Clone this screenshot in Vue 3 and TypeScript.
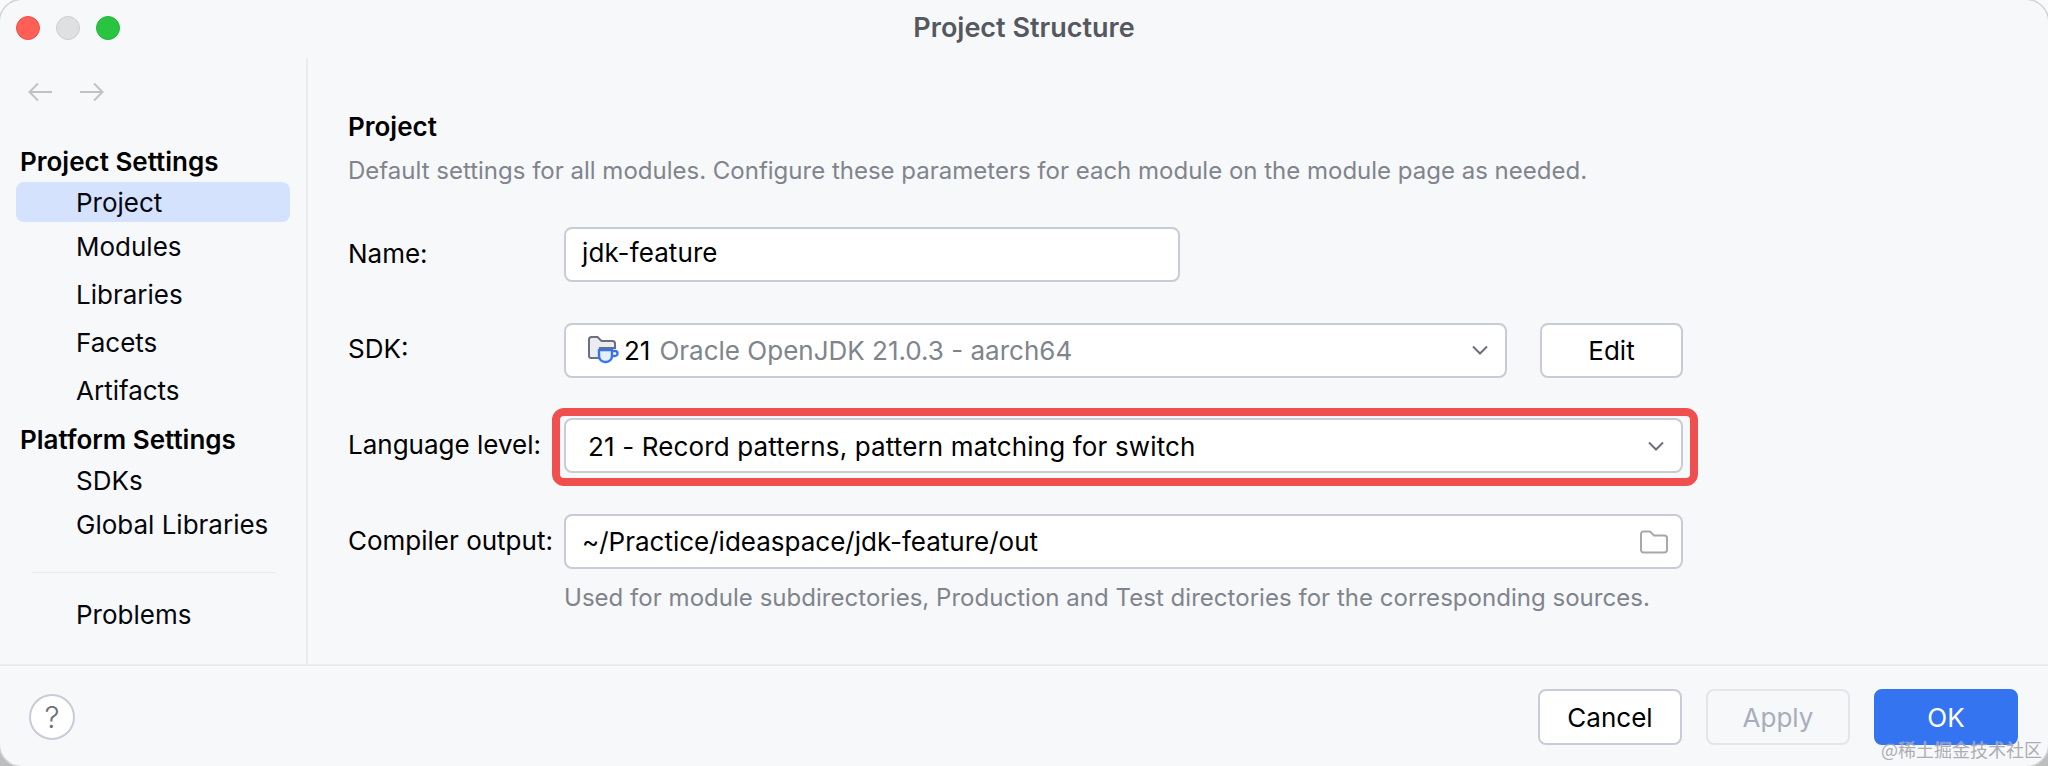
<script setup lang="ts">
interface NavItem {
  label: string
  active?: boolean
}

const projectItems: NavItem[] = [
  { label: 'Project', active: true },
  { label: 'Modules' },
  { label: 'Libraries' },
  { label: 'Facets' },
  { label: 'Artifacts' },
]
const platformItems: NavItem[] = [{ label: 'SDKs' }, { label: 'Global Libraries' }]
</script>

<template>
  <div class="window">
    <header class="titlebar">
      <div class="lights">
        <span class="light red" />
        <span class="light grey" />
        <span class="light green" />
      </div>
      <span class="title">Project Structure</span>
    </header>

    <div class="body">
      <aside class="sidebar">
        <div class="arrows">
          <svg width="24" height="20" viewBox="0 0 24 20" fill="none" stroke="#c0c2c6" stroke-width="2">
            <path d="M24 10H1.5M10 1.5 1.5 10l8.500 8.500" />
          </svg>
          <svg width="24" height="20" viewBox="0 0 24 20" fill="none" stroke="#c0c2c6" stroke-width="2">
            <path d="M0 10h22.500M14 1.500l8.500 8.500-8.500 8.500" />
          </svg>
        </div>
        <div class="group-title first">Project Settings</div>
        <div class="nav-item project-item" v-for="item in projectItems" :key="item.label" :class="{ active: item.active }">
          {{ item.label }}
        </div>
        <div class="group-title second">Platform Settings</div>
        <div class="nav-item platform-item" v-for="item in platformItems" :key="item.label">{{ item.label }}</div>
        <div class="nav-sep" />
        <div class="nav-item">Problems</div>
      </aside>

      <main class="content">
        <h1 class="heading">Project</h1>
        <p class="hint">Default settings for all modules. Configure these parameters for each module on the module page as needed.</p>

        <div class="form">
          <label class="label">Name:</label>
          <div class="field name-field">jdk-feature</div>

          <label class="label">SDK:</label>
          <div class="sdk-row">
            <div class="field sdk-field">
              <svg class="sdk-icon" width="32" height="30" viewBox="0 0 32 30" fill="none">
                <path d="M2 21V4.500A2.500 2.500 0 0 1 4.500 2h6l4 4h11A2.500 2.500 0 0 1 28 8.500V13H13v10H4a2 2 0 0 1-2-2Z" fill="#ebecf0" stroke="#6c707e" stroke-width="2" />
                <path d="M12 15h13v6a6 6 0 0 1-6 6h-1a6 6 0 0 1-6-6v-6Z" fill="#e7effd" stroke="#3574f0" stroke-width="2.400" />
                <path d="M25 16h3a2.500 2.500 0 0 1 0 5h-3" stroke="#3574f0" stroke-width="2.400" />
              </svg>
              <span class="sdk-num">21</span>
              <span class="sdk-name">Oracle OpenJDK 21.0.3 - aarch64</span>
              <svg class="chevron" width="16" height="10" viewBox="0 0 16 10" fill="none" stroke="#6c707e" stroke-width="2">
                <path d="m1 1.500 7 7 7-7" />
              </svg>
            </div>
            <button class="btn edit">Edit</button>
          </div>

          <label class="label">Language level:</label>
          <div class="field lang-field">
            <span class="lang-text">21 - Record patterns, pattern matching for switch</span>
            <svg class="chevron" width="16" height="10" viewBox="0 0 16 10" fill="none" stroke="#6c707e" stroke-width="2">
              <path d="m1 1.500 7 7 7-7" />
            </svg>
            <span class="highlight" />
          </div>

          <label class="label">Compiler output:</label>
          <div class="field output-field">
            <span>~/Practice/ideaspace/jdk-feature/out</span>
            <svg class="folder" width="30" height="26" viewBox="0 0 30 26" fill="none" stroke="#a6a8ae" stroke-width="2">
              <path d="M2 21V5a2.500 2.500 0 0 1 2.500-2.500h6.500l4 4h10.500A2.500 2.500 0 0 1 28 9v12a2.500 2.500 0 0 1-2.500 2.500h-21A2.500 2.500 0 0 1 2 21Z" />
            </svg>
          </div>

          <span />
          <p class="hint output-hint">Used for module subdirectories, Production and Test directories for the corresponding sources.</p>
        </div>
      </main>
    </div>

    <footer class="footer">
      <button class="help">?</button>
      <div class="actions">
        <button class="btn">Cancel</button>
        <button class="btn disabled">Apply</button>
        <button class="btn primary">OK</button>
      </div>
    </footer>

    <span class="watermark">@稀土掘金技术社区</span>
  </div>
</template>

<style>
html,
body {
  margin: 0;
  background: linear-gradient(#fafafa, #bdbdbd);
}
</style>

<style scoped>
.window {
  position: relative;
  width: 2048px;
  height: 766px;
  box-sizing: border-box;
  display: flex;
  flex-direction: column;
  background: #f7f8fa;
  border-radius: 22px;
  box-shadow: 0 0 0 1.500px #d2d3d6;
  overflow: hidden;
  color: #000;
  font-family: Inter, 'Noto Sans', sans-serif;
  font-size: 26px;
}

.titlebar {
  position: relative;
  height: 58px;
  flex: none;
  display: flex;
  align-items: center;
  justify-content: center;
}

.lights {
  position: absolute;
  left: 16px;
  top: 16px;
  display: flex;
  gap: 16px;
}

.light {
  width: 24px;
  height: 24px;
  box-sizing: border-box;
  border-radius: 50%;
}

.red {
  background: #ff5f57;
  border: 1px solid #e9524b;
}

.grey {
  background: #dfe0e2;
  border: 1px solid #cdced1;
}

.green {
  background: #29c440;
  border: 1px solid #22b538;
}

.title {
  font-size: 27px;
  font-weight: 600;
  color: #55585e;
  margin-top: -4px;
}

.body {
  flex: 1;
  display: flex;
  min-height: 0;
}

.sidebar {
  width: 308px;
  flex: none;
  box-sizing: border-box;
  padding: 24px 16px 0 16px;
  border-right: 2px solid #ebecf0;
  display: flex;
  flex-direction: column;
}

.arrows {
  display: flex;
  gap: 28px;
  padding-left: 12px;
  height: 20px;
}

.group-title {
  font-weight: 600;
  padding-left: 4px;
  height: 40px;
  line-height: 40px;
}

.first {
  margin-top: 40px;
  height: 40px;
  line-height: 40px;
}

.second {
  height: 43px;
  line-height: 44px;
}

.nav-item {
  height: 40px;
  line-height: 40px;
  padding-left: 60px;
  border-radius: 8px;
  color: #05070c;
  margin-bottom: 8px;
}

.nav-item.active {
  background: #d4e2fd;
  margin-bottom: 4px;
}

.project-item {
  line-height: 42px;
}

.platform-item {
  margin-bottom: 4px;
}

.nav-sep {
  height: 1px;
  background: #ebecf0;
  margin: 23px 14px 22px 16px;
}

.content {
  flex: 1;
  min-width: 0;
  padding: 53px 0 0 40px;
}

.heading {
  margin: 0;
  font-size: 26px;
  font-weight: 600;
  line-height: 32px;
}

.hint {
  margin: 0;
  font-size: 24px;
  color: #80848c;
  line-height: 30px;
  white-space: nowrap;
}

.content > .hint {
  margin-top: 13px;
}

.form {
  margin-top: 41px;
  display: grid;
  grid-template-columns: 216px 1119px;
  grid-auto-rows: 55px;
  row-gap: 40.7px;
  align-items: center;
}

.label {
  margin-top: -3px;
}

.field {
  position: relative;
  box-sizing: border-box;
  height: 55px;
  background: #fff;
  border: 2px solid #c9ccd6;
  border-radius: 8px;
  display: flex;
  align-items: center;
  padding: 0 17px 0 16px;
  white-space: nowrap;
}

.name-field {
  width: 616px;
  padding-bottom: 4px;
  letter-spacing: 0.1px;
}

.sdk-row {
  display: flex;
  justify-content: space-between;
}

.sdk-field {
  width: 943px;
  padding-left: 21px;
}

.sdk-icon {
  flex: none;
}

.sdk-num {
  margin-left: 5px;
}

.sdk-name {
  margin-left: 9px;
  color: #80848c;
}

.chevron {
  margin-left: auto;
}

.lang-text {
  padding: 2px 0 0 6px;
  letter-spacing: 0.14px;
}

.highlight {
  position: absolute;
  inset: -12px -17px -15px -14px;
  border: 8px solid #ef4f4f;
  border-radius: 12px;
  pointer-events: none;
}

.output-field {
  padding-right: 12px;
}

.folder {
  margin-left: auto;
}

.output-hint {
  align-self: start;
  margin-top: -27px;
  letter-spacing: 0.03px;
}

.btn {
  box-sizing: border-box;
  width: 144px;
  height: 56px;
  background: #fff;
  border: 2px solid #c9ccd6;
  border-radius: 8px;
  font: inherit;
  color: #000;
  padding: 0;
}

.edit {
  width: 143px;
  height: 55px;
}

.footer {
  height: 102px;
  flex: none;
  box-sizing: border-box;
  border-top: 2px solid #ebecf0;
  display: flex;
  align-items: flex-start;
  justify-content: space-between;
  padding: 23px 30px 0 29px;
}

.help {
  width: 46px;
  height: 46px;
  margin-top: 5px;
  padding: 0;
  box-sizing: border-box;
  border-radius: 50%;
  background: #fff;
  border: 2px solid #c9ccd6;
  color: #6c707e;
  font: inherit;
  font-size: 30px;
  font-weight: 300;
}

.actions {
  display: flex;
  gap: 24px;
}

.disabled {
  background: transparent;
  border-color: #e3e5ea;
  color: #a8adbd;
}

.primary {
  background: #3574f0;
  border-color: #3574f0;
  color: #fff;
}

.watermark {
  position: absolute;
  right: 6px;
  bottom: 4px;
  font-family: 'Noto Sans CJK SC', sans-serif;
  font-size: 18px;
  color: #9ea0a6;
  opacity: 0.85;
  text-shadow: 0 0 1px #fff;
}
</style>
